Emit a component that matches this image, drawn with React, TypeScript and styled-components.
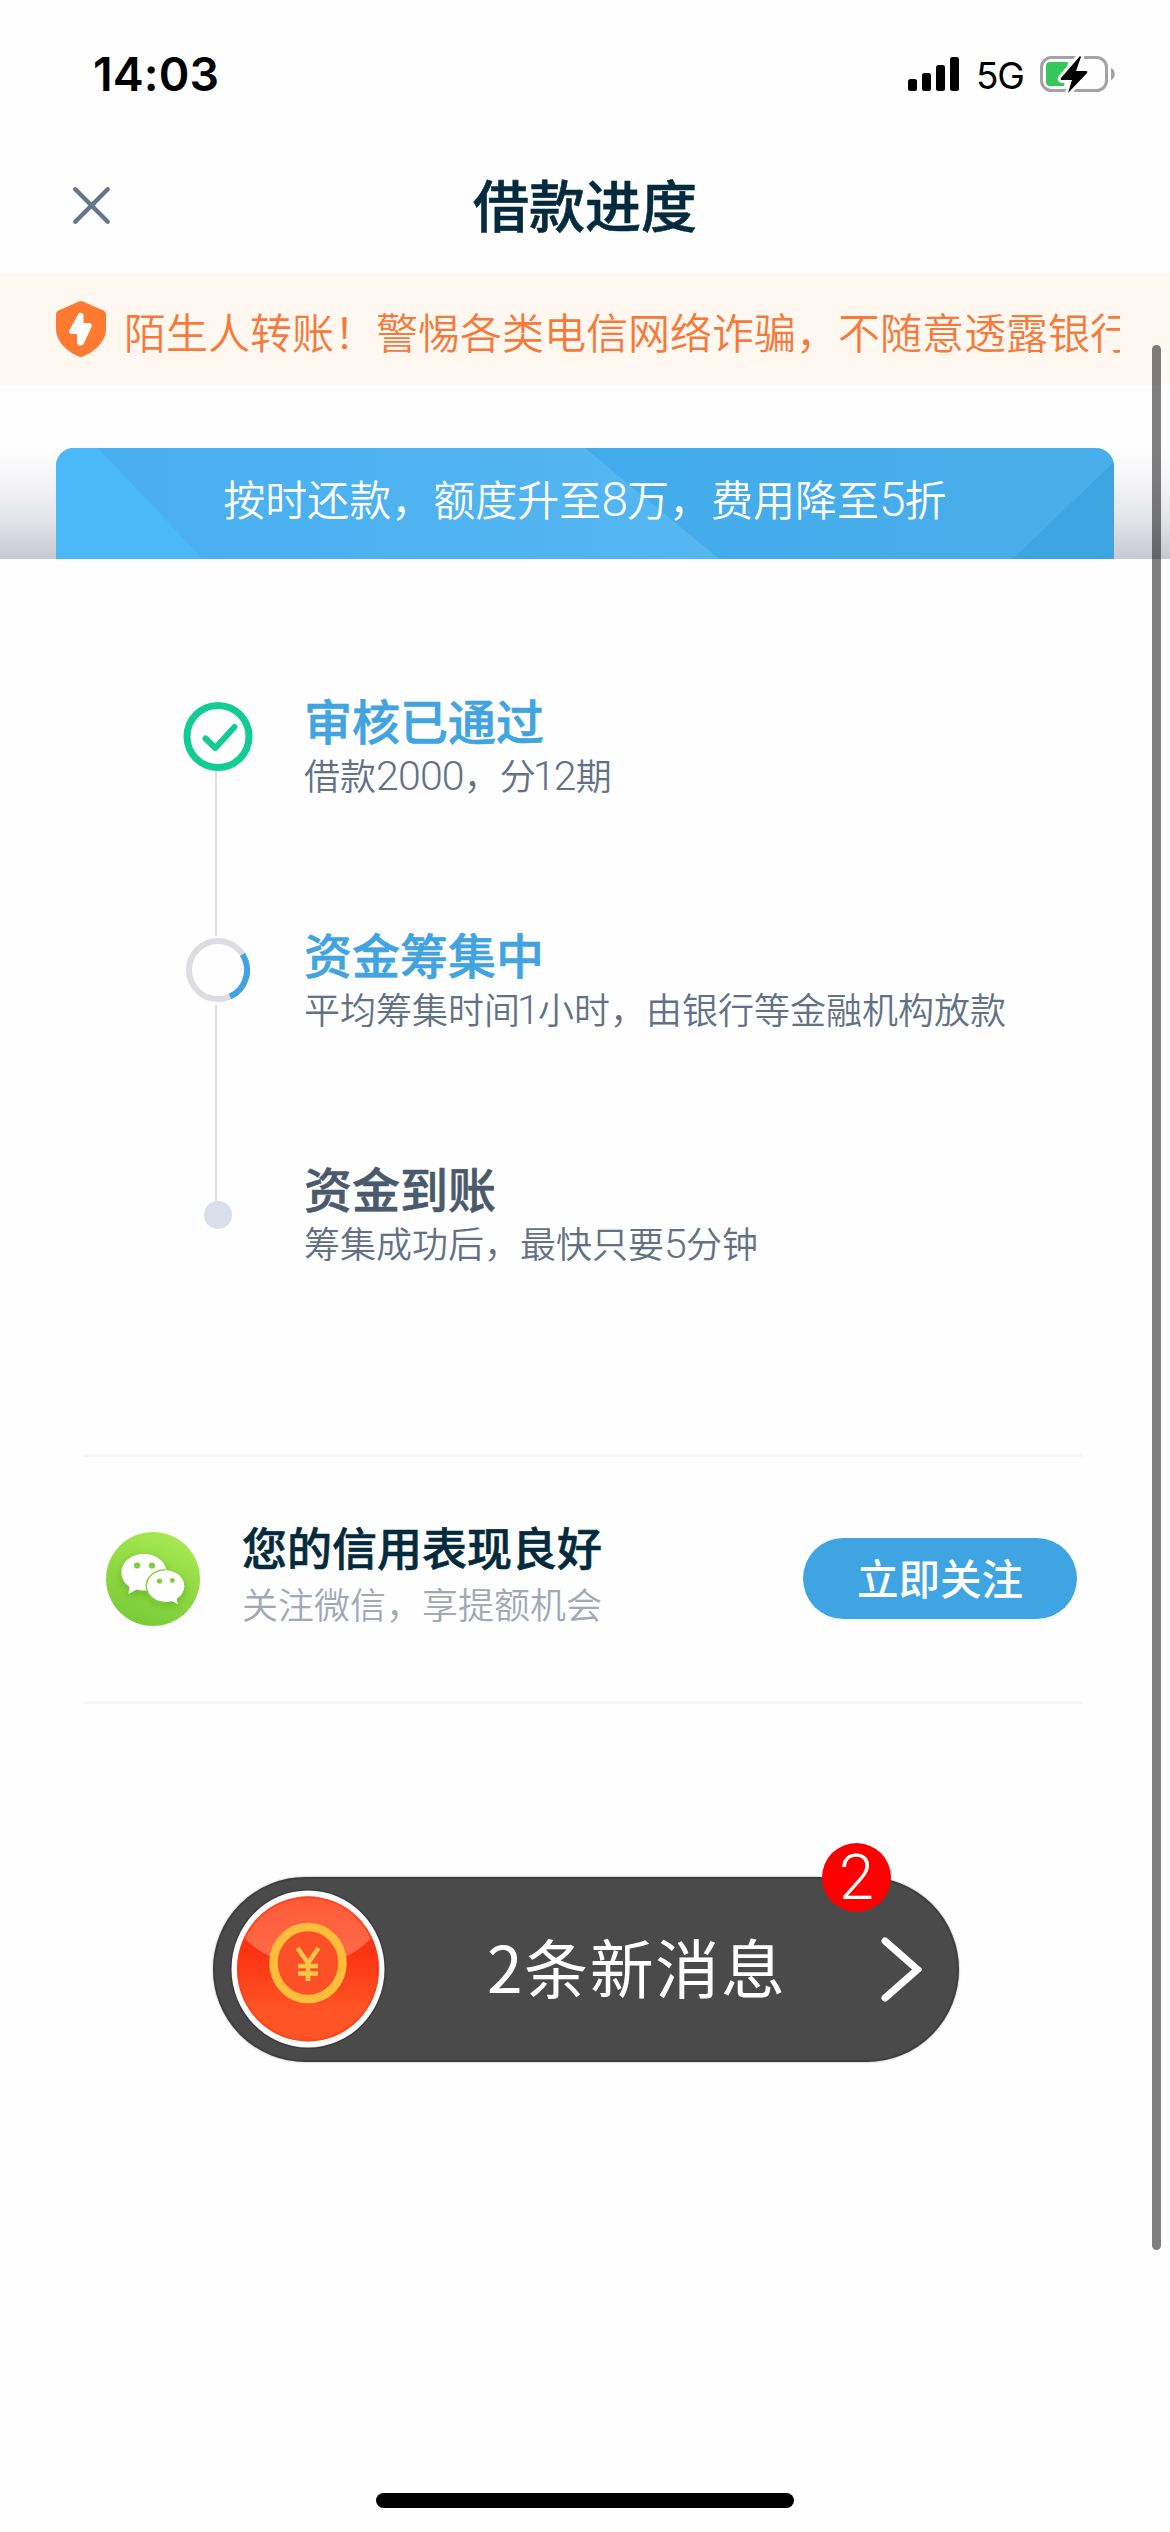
import React from 'react';
import styled, { createGlobalStyle } from 'styled-components';

const GlobalStyle = createGlobalStyle`
  * { box-sizing: border-box; }
  body {
    margin: 0;
    background: #fefefe;
    font-family: "Noto Sans CJK SC", "Noto Sans", sans-serif;
  }
`;

const Screen = styled.main`
  position: relative;
  display: flex;
  flex-direction: column;
  width: 1170px;
  height: 2532px;
  overflow: hidden;
  background: #fefefe;
`;

const StatusBar = styled.header`
  display: flex;
  align-items: center;
  justify-content: space-between;
  height: 148px;
  padding: 0 54px 0 93px;
  font-family: Inter, sans-serif;
  color: #000;
`;

const Clock = styled.time`
  font-size: 46.5px;
  font-weight: 600;
  line-height: 56px;
  letter-spacing: 0.1px;
`;

const StatusIcons = styled.div`
  display: flex;
  align-items: center;
`;

const Network = styled.span`
  width: 64px;
  margin-left: 16px;
  font-size: 37px;
  line-height: 40px;
  letter-spacing: -1.2px;
  padding-top: 4px;
`;

const NavBar = styled.nav`
  display: grid;
  grid-template-columns: 184px 1fr 184px;
  align-items: center;
  height: 125px;
  padding-bottom: 10px;
`;

const CloseButton = styled.button`
  display: flex;
  padding: 0;
  margin-left: 71px;
  border: 0;
  background: none;
`;

const PageTitle = styled.h1`
  margin: 0;
  padding-bottom: 6px;
  text-align: center;
  font-size: 56px;
  font-weight: 500;
  line-height: 80px;
  color: #042b3d;
  -webkit-text-stroke: 0.6px currentColor;
`;

const Notice = styled.section`
  display: flex;
  align-items: center;
  height: 112px;
  padding: 0 50px 0 56px;
  background: #fef8f0;
`;

const NoticeText = styled.p`
  flex: 1;
  margin: 3px 0 0 18px;
  overflow: hidden;
  white-space: nowrap;
  font-size: 42px;
  font-weight: 350;
  line-height: 62px;
  color: #f57a3c;
`;

const Hero = styled.section`
  height: 174px;
  padding: 63px 56px 0;
  background: linear-gradient(
    to bottom,
    #fefefe 0,
    #fefefe 60px,
    #f6f6f9 95px,
    #e3e4e9 135px,
    #c6c8d0 174px
  );
`;

const Banner = styled.div`
  display: grid;
  height: 111px;
  overflow: hidden;
  border-radius: 18px 18px 0 0;
  > * { grid-area: 1 / 1; }
`;

const BannerText = styled.p`
  margin: 0;
  padding-top: 19px;
  text-align: center;
  white-space: nowrap;
  font-size: 42px;
  font-weight: 350;
  line-height: 62px;
  color: #fff;
`;

const Digits = styled.span<{ $narrow?: boolean }>`
  font-family: Roboto, sans-serif;
  font-size: 1.14em;
  font-weight: 300;
  line-height: 0;
  letter-spacing: -0.02em;
  margin: ${p => (p.$narrow ? '0 -1px 0 -3px' : '0')};
`;

const Steps = styled.ol`
  display: flex;
  flex-direction: column;
  margin: 0;
  padding: 133px 60px 0 183px;
  list-style: none;
`;

const Step = styled.li<{ $last?: boolean }>`
  display: flex;
  height: ${p => (p.$last ? 112 : 234)}px;
`;

const Marker = styled.div<{ $top: number }>`
  display: flex;
  flex-direction: column;
  align-items: center;
  width: 70px;
  padding-top: ${p => p.$top}px;
  svg { display: block; flex: none; }
`;

const Rail = styled.span<{ $length: number; $gap?: number }>`
  flex: none;
  width: 2px;
  height: ${p => p.$length}px;
  margin: ${p => p.$gap ?? 0}px 4px 0 0;
  background: #dcdee4;
`;

const PendingDot = styled.span`
  width: 28px;
  height: 28px;
  border-radius: 50%;
  background: #d9dfeb;
`;

const StepBody = styled.div`
  margin-left: 51px;
  white-space: nowrap;
`;

const StepTitle = styled.h2<{ $active?: boolean }>`
  margin: 0;
  font-size: 48px;
  font-weight: 500;
  line-height: 54px;
  color: ${p => (p.$active ? '#41a4e1' : '#4a5a6d')};
  -webkit-text-stroke: 0.6px currentColor;
`;

const StepNote = styled.p`
  margin: 0;
  font-size: 36px;
  font-weight: 350;
  line-height: 57px;
  color: #627286;
`;

const Follow = styled.section`
  display: flex;
  align-items: center;
  height: 250px;
  margin: 182px 87px 0 84px;
  padding: 0 6px 0 22px;
  border: solid #f6f6f7;
  border-width: 3px 0;
  svg { flex: none; }
`;

const FollowText = styled.div`
  flex: 1;
  margin-left: 42px;
  padding-bottom: 9px;
  line-height: 57px;
`;

const FollowTitle = styled.h3`
  margin: 0;
  font-size: 45px;
  font-weight: 500;
  color: #042b3d;
  -webkit-text-stroke: 0.6px currentColor;
`;

const FollowNote = styled.p`
  margin: 0;
  font-size: 36px;
  font-weight: 350;
  color: #a0a9b6;
`;

const FollowButton = styled.button`
  width: 274px;
  height: 81px;
  margin-bottom: 1px;
  padding: 0 0 3px;
  border: 0;
  border-radius: 41px;
  background: #3fa5e2;
  font: 500 41.5px/62px "Noto Sans CJK SC", sans-serif;
  color: #fff;
`;

const MessagePill = styled.button`
  position: relative;
  display: flex;
  align-items: center;
  align-self: center;
  width: 746px;
  height: 185px;
  margin: 173px 0 0 2px;
  padding: 0 35px 0 15px;
  border: 2px solid #3e3e3e;
  border-radius: 93px;
  background: #4a4a4a;
  box-shadow: 0 0 2px rgba(0, 0, 0, 0.45);
`;

const PillText = styled.span`
  flex: 1;
  padding: 0 0 10px 101px;
  text-align: left;
  white-space: nowrap;
  font: 400 64px/90px "Noto Sans CJK SC", sans-serif;
  letter-spacing: 1.6px;
  color: #fff;
`;

const Badge = styled.span`
  position: absolute;
  top: -36px;
  right: 66px;
  display: flex;
  align-items: center;
  justify-content: center;
  width: 69px;
  height: 69px;
  border-radius: 50%;
  background: #fe0000;
  font: 300 63px/69px Roboto, sans-serif;
  color: #fff;
`;

const ScrollThumb = styled.div`
  position: absolute;
  top: 345px;
  right: 9px;
  width: 9px;
  height: 1905px;
  border-radius: 5px;
  background: rgba(0, 0, 0, 0.5);
`;

const HomeIndicator = styled.div`
  align-self: center;
  width: 418px;
  height: 15px;
  margin-top: auto;
  margin-bottom: 24px;
  border-radius: 8px;
  background: #000;
`;

const SignalIcon = () => (
  <svg width="52" height="36" viewBox="0 0 52 36">
    <rect x="0" y="23" width="9" height="12" rx="2.5" />
    <rect x="14" y="17" width="9" height="18" rx="2.5" />
    <rect x="28" y="9" width="9" height="26" rx="2.5" />
    <rect x="42" y="1" width="9" height="34" rx="2.5" />
  </svg>
);

const BatteryIcon = () => (
  <svg width="76" height="40" viewBox="0 0 76 40">
    <rect x="1.5" y="3.5" width="65" height="33" rx="10" fill="none" stroke="#a3a3a3" strokeWidth="3" />
    <path d="M71 14c5 2 5 10 0 12z" fill="#a3a3a3" />
    <path d="M10 8h18l-4 24H10q-4 0-4-4V12q0-4 4-4z" fill="#35c759" />
    <path
      d="M40 2L21 24q-1 2 1 2h10L28 39 47 19q1-2-1-2H36L41 3z"
      fill="#000"
      stroke="#fff"
      strokeWidth="6"
      strokeLinejoin="round"
      paintOrder="stroke"
    />
  </svg>
);

const CloseIcon = () => (
  <svg width="41" height="41" viewBox="0 0 41 41" stroke="#66768a" strokeWidth="4.4" strokeLinecap="round">
    <path d="M4.3 4.3l32.4 32.4M36.7 4.3L4.3 36.7" />
  </svg>
);

const ShieldIcon = () => (
  <svg width="50" height="58" viewBox="0 0 50 58">
    <path d="M23 1.6q2-1 4 0L47.5 10.500Q50 11.500 50 14v15c0 13-12 23-23 27.500q-2 .8-4 0C12 52 0 42 0 29V14q0-2.500 2.500-3.500z" fill="#fd7a30" />
    <path d="M23 13q4-1 4.500 2v8h6q3 .5 2 4L28 43q-1 3-4 2.500-3-.5-3-3V34h-5.500q-3-.5-2-4z" fill="#fff" />
  </svg>
);

const BannerArt = () => (
  <svg width="1058" height="111" viewBox="0 0 1058 111">
    <defs>
      <linearGradient id="band" x1="0" x2="1" y1="0" y2="0">
        <stop offset="0" stopColor="#47aef0" />
        <stop offset="1" stopColor="#55b7f2" />
      </linearGradient>
      <linearGradient id="sky" x1="0" x2="1" y1="0" y2="0">
        <stop offset="0" stopColor="#42abeb" />
        <stop offset="1" stopColor="#49afea" />
      </linearGradient>
    </defs>
    <path d="M0 0h540l124 111H0z" fill="url(#band)" />
    <path d="M529 0h529v111H663z" fill="url(#sky)" />
    <path d="M0 0h42l105 111H0z" fill="#4bb8f9" />
    <path d="M1058 14v97H957z" fill="#3ea5e3" />
  </svg>
);

const DoneIcon = () => (
  <svg width="70" height="69" viewBox="0 0 70 69" fill="none" stroke="#12cb95">
    <circle cx="35" cy="34.500" r="31" strokeWidth="7" />
    <path d="M22.500 36.500l9.800 9.500 19.200-21" strokeWidth="6" strokeLinecap="round" strokeLinejoin="round" />
  </svg>
);

const SpinnerIcon = () => (
  <svg width="64" height="64" viewBox="0 0 64 64" fill="none" strokeWidth="6">
    <circle cx="32" cy="32" r="29" stroke="#dcdde1" />
    <path d="M56.500 16.500A29 29 0 0 1 44 58.500" stroke="#41a4e1" />
  </svg>
);

const WechatIcon = () => (
  <svg width="94" height="94" viewBox="0 0 94 94">
    <defs>
      <linearGradient id="leaf" x1="0.7" x2="0.35" y1="0" y2="1">
        <stop offset="0" stopColor="#a9e952" />
        <stop offset="1" stopColor="#79cb38" />
      </linearGradient>
      <filter id="soft" x="-30%" y="-30%" width="160%" height="170%">
        <feDropShadow dx="0" dy="3" stdDeviation="4" floodColor="#3f9417" floodOpacity="0.5" />
      </filter>
    </defs>
    <circle cx="47" cy="47" r="47" fill="url(#leaf)" />
    <g filter="url(#soft)">
      <path d="M38 22c-12.500 0-22.500 8-22.500 18.500 0 6 3 11 8 14.300L22.500 62l8-4.500q3.700 1 7.500 1c12.500 0 22.500-7.700 22.500-18S50.500 22 38 22z" fill="#fff" />
      <path d="M59.500 38.500C49 38.500 41 45.500 41 54s8 15.700 18.500 15.700q3.500 0 6.500-.8l5.600 2.900-1.200-5c4.800-3 7.800-7.600 7.800-12.800 0-8.500-8.200-15.500-18.700-15.500z" fill="#fff" />
    </g>
    <path
      d="M59.500 38.500C49 38.500 41 45.500 41 54s8 15.700 18.500 15.700"
      fill="none"
      stroke="#84d03f"
      strokeWidth="3"
    />
    <path d="M59.500 38.500C49 38.500 41 45.500 41 54s8 15.700 18.500 15.700q3.500 0 6.500-.8l5.600 2.900-1.200-5c4.800-3 7.800-7.600 7.800-12.800 0-8.500-8.200-15.500-18.700-15.500z" fill="#fff" />
    <g fill="#7fcc3c">
      <circle cx="31" cy="33.500" r="3.100" />
      <circle cx="46" cy="33.500" r="3.100" />
      <circle cx="53.500" cy="49" r="2.600" />
      <circle cx="66.300" cy="48.500" r="2.400" />
    </g>
  </svg>
);

const CoinIcon = () => (
  <svg width="156" height="162" viewBox="0 0 156 162">
    <defs>
      <linearGradient id="coin" x1="0" x2="0" y1="0" y2="1">
        <stop offset="0.4" stopColor="#fb3312" />
        <stop offset="0.75" stopColor="#ff5426" />
      </linearGradient>
      <linearGradient id="gloss" x1="0" x2="0" y1="0" y2="1">
        <stop offset="0.5" stopColor="#ff5431" />
        <stop offset="1" stopColor="#ff6d4b" />
      </linearGradient>
      <clipPath id="face"><ellipse cx="78" cy="80" rx="71" ry="72.500" /></clipPath>
    </defs>
    <ellipse cx="78" cy="80" rx="78" ry="80" fill="#3c3c3c" />
    <ellipse cx="78" cy="80" rx="76.500" ry="78.500" fill="#fff" />
    <g clipPath="url(#face)">
      <rect width="156" height="160" fill="url(#coin)" />
      <circle cx="78" cy="-12" r="88" fill="url(#gloss)" />
      <ellipse cx="78" cy="80" rx="70.500" ry="72" fill="none" stroke="#fb3a14" strokeWidth="3" opacity="0.6" />
    </g>
    <ellipse cx="78" cy="74" rx="34.500" ry="36" fill="#fd5027" stroke="#febd3a" strokeWidth="8.500" />
    <path d="M67.500 59L78 74l10.500-15M78 74v18M68 77h20M68 84.500h20" fill="none" stroke="#fec54a" strokeWidth="4.600" />
  </svg>
);

const ChevronIcon = () => (
  <svg width="42" height="66" viewBox="0 0 42 66" fill="none" stroke="#fff" strokeWidth="7" strokeLinecap="round" strokeLinejoin="miter">
    <path d="M5 4L37.500 32.500 5 61" />
  </svg>
);

export default function App() {
  return (
    <>
      <GlobalStyle />
      <Screen>
        <StatusBar>
          <Clock>14:03</Clock>
          <StatusIcons>
            <SignalIcon />
            <Network>5G</Network>
            <BatteryIcon />
          </StatusIcons>
        </StatusBar>

        <NavBar>
          <CloseButton aria-label="关闭"><CloseIcon /></CloseButton>
          <PageTitle>借款进度</PageTitle>
        </NavBar>

        <Notice>
          <ShieldIcon />
          <NoticeText>陌生人转账！警惕各类电信网络诈骗，不随意透露银行</NoticeText>
        </Notice>

        <Hero>
          <Banner>
            <BannerArt />
            <BannerText>
              按时还款，额度升至<Digits>8</Digits>万，费用降至<Digits>5</Digits>折
            </BannerText>
          </Banner>
        </Hero>

        <Steps>
          <Step>
            <Marker $top={10}>
              <DoneIcon />
              <Rail $length={165} />
            </Marker>
            <StepBody>
              <StepTitle $active>审核已通过</StepTitle>
              <StepNote>
                借款<Digits>2000</Digits>，分<Digits $narrow>1</Digits><Digits>2</Digits>期
              </StepNote>
            </StepBody>
          </Step>
          <Step>
            <Marker $top={12}>
              <SpinnerIcon />
              <Rail $length={196} $gap={3} />
            </Marker>
            <StepBody>
              <StepTitle $active>资金筹集中</StepTitle>
              <StepNote>平均筹集时间<Digits $narrow>1</Digits>小时，由银行等金融机构放款</StepNote>
            </StepBody>
          </Step>
          <Step $last>
            <Marker $top={41}>
              <PendingDot />
            </Marker>
            <StepBody>
              <StepTitle>资金到账</StepTitle>
              <StepNote>筹集成功后，最快只要<Digits>5</Digits>分钟</StepNote>
            </StepBody>
          </Step>
        </Steps>

        <Follow>
          <WechatIcon />
          <FollowText>
            <FollowTitle>您的信用表现良好</FollowTitle>
            <FollowNote>关注微信，享提额机会</FollowNote>
          </FollowText>
          <FollowButton>立即关注</FollowButton>
        </Follow>

        <MessagePill>
          <CoinIcon />
          <PillText>2条新消息</PillText>
          <ChevronIcon />
          <Badge>2</Badge>
        </MessagePill>

        <HomeIndicator />
        <ScrollThumb />
      </Screen>
    </>
  );
}
